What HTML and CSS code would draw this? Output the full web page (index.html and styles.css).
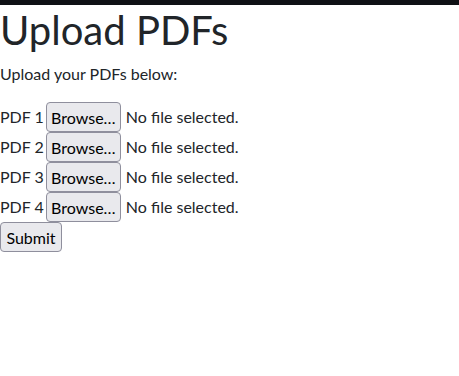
FILE: index.html
```html
<!DOCTYPE html>
<html lang="en">
<head>
    <meta charset="UTF-8">
    <meta name="viewport" content="width=device-width, initial-scale=1.0">
    <title>Upload PDFs</title>
    <link rel="stylesheet" href="styles.css">
</head>
<body>
    <div class="top-bar"></div>

    <h1>Upload PDFs</h1>
    <p class="intro">Upload your PDFs below:</p>

    <form class="upload-form">
        <div class="file-row">
            <span class="file-label">PDF 1</span>
            <button type="button" class="browse">Browse…</button>
            <span class="file-name">No file selected.</span>
        </div>
        <div class="file-row">
            <span class="file-label">PDF 2</span>
            <button type="button" class="browse">Browse…</button>
            <span class="file-name">No file selected.</span>
        </div>
        <div class="file-row">
            <span class="file-label">PDF 3</span>
            <button type="button" class="browse">Browse…</button>
            <span class="file-name">No file selected.</span>
        </div>
        <div class="file-row">
            <span class="file-label">PDF 4</span>
            <button type="button" class="browse">Browse…</button>
            <span class="file-name">No file selected.</span>
        </div>
        <button type="submit" class="submit">Submit</button>
    </form>
</body>
</html>
```

FILE: styles.css
```css
* {
    margin: 0;
    padding: 0;
    box-sizing: border-box;
}

body {
    font-family: 'Lato', 'Noto Sans', sans-serif;
    font-size: 16px;
    line-height: 1.5;
    color: #212529;
    background: #fff;
}

.top-bar {
    height: 5px;
    background: #0f1115;
}

h1 {
    font-size: 40px;
    font-weight: 400;
    line-height: 1.2;
    margin-top: 1px;
    margin-bottom: 8px;
}

.intro {
    margin-bottom: 16px;
}

.upload-form {
    display: flex;
    flex-direction: column;
    align-items: flex-start;
}

.file-row {
    display: flex;
    align-items: center;
    gap: 2px;
    height: 30px;
}

.file-name {
    margin-left: 3px;
}

button {
    font-family: inherit;
    font-size: 16px;
    color: #000;
    background: #e9e9ed;
    border: 1px solid #8f8f9d;
    border-radius: 4px;
    height: 30px;
    padding: 0 6px;
}

.browse {
    width: 75px;
    padding: 0 2px;
}

.submit {
    width: 62px;
    padding: 0 4px;
}
```
